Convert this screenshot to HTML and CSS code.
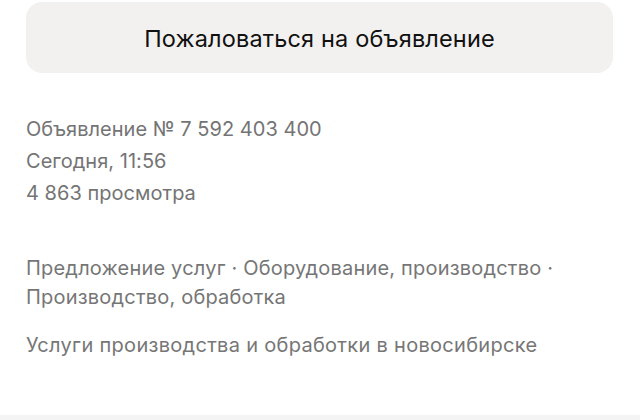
FILE: index.html
```html
<!DOCTYPE html>
<html lang="ru">
<head>
<meta charset="utf-8">
<link rel="stylesheet" href="styles.css">
</head>
<body>
<div class="page">
  <button class="report">Пожаловаться на объявление</button>
  <div class="meta">
    <div class="line">Объявление № 7 592 403 400</div>
    <div class="line">Сегодня, 11:56</div>
    <div class="line">4 863 просмотра</div>
  </div>
  <div class="cats">Предложение услуг · Оборудование, производство · Производство, обработка</div>
  <div class="title">Услуги производства и обработки в новосибирске</div>
</div>
<div class="footer"></div>
</body>
</html>
```
FILE: styles.css
```css
html, body {
  margin: 0;
  padding: 0;
  background: #ffffff;
}
body {
  width: 640px;
  height: 420px;
  overflow: hidden;
  font-family: Inter, "Noto Sans", sans-serif;
  display: flex;
  flex-direction: column;
}
.page {
  flex: 1;
  padding: 2px 27px 0 26px;
}
.report {
  display: block;
  width: 587px;
  height: 71px;
  border: none;
  border-radius: 16px;
  background: #f2f1ef;
  color: #111;
  font-family: inherit;
  font-size: 23.5px;
  letter-spacing: 0.15px;
  padding: 2px 0 0 0;
}
.meta {
  margin-top: 40px;
  color: #747474;
  font-size: 20px;
  letter-spacing: 0.03px;
}
.line {
  line-height: 32px;
}
.cats {
  margin-top: 45px;
  color: #767676;
  font-size: 20px;
  letter-spacing: 0.2px;
  line-height: 29px;
  width: 560px;
}
.title {
  margin-top: 19px;
  color: #767676;
  font-size: 20px;
  letter-spacing: 0.3px;
  line-height: 29px;
}
.footer {
  height: 5px;
  background: #f4f4f4;
}
```
